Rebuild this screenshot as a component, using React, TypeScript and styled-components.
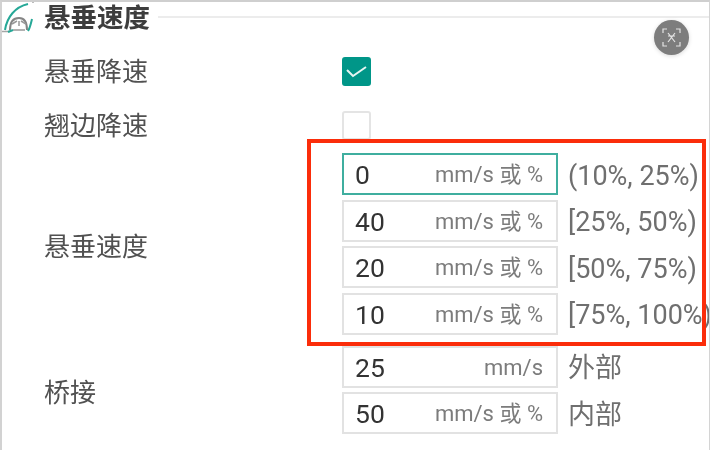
import styled, { createGlobalStyle } from 'styled-components'

const GlobalStyle = createGlobalStyle`
    html, body {
        margin: 0;
        padding: 0;
        background: #fff;
    }
    body {
        font-family: Roboto, "Noto Sans CJK SC", sans-serif;
    }
`

const Frame = styled.div`
    position: relative;
    box-sizing: border-box;
    width: 710px;
    height: 450px;
    overflow: hidden;
    border-top: 2px solid #cfcfcf;
    border-left: 2px solid #d2d2d2;
    border-right: 1px solid #d4d4d4;
    background: #fff;
    filter: blur(0.4px);
`

const Header = styled.div`
    display: flex;
    align-items: center;
    gap: 7px;
    height: 30px;
`

const HeaderIcon = styled.svg`
    flex: none;
    width: 35px;
    height: 32px;
`

const Title = styled.h2`
    margin: 0;
    padding-top: 2px;
    font-size: 26.5px;
    line-height: 30px;
    font-weight: 700;
    color: #3d3d3d;
    white-space: nowrap;
`

const Rule = styled.div`
    flex: 1;
    height: 2px;
    margin: -1px 0 0 1px;
    background: #ececec;
`

const Form = styled.div`
    display: flex;
    flex-direction: column;
    padding: 23px 0 0 42px;
`

const FormRow = styled.div<{ $gap?: number }>`
    display: grid;
    grid-template-columns: 298px 1fr;
    align-items: center;
    margin-bottom: ${(p) => p.$gap ?? 0}px;
`

const Label = styled.div<{ $shift: number }>`
    font-size: 26px;
    line-height: 30px;
    color: #515151;
    white-space: nowrap;
    padding-top: ${(p) => p.$shift}px;
`

const CheckBox = styled.div<{ $on?: boolean }>`
    box-sizing: border-box;
    width: 29px;
    height: 29px;
    display: flex;
    align-items: center;
    justify-content: center;
    border-radius: 3px;
    border: 2px solid ${(p) => (p.$on ? '#009688' : '#e4e4e4')};
    background: ${(p) => (p.$on ? '#009688' : '#fff')};
`

const Stack = styled.div`
    display: flex;
    flex-direction: column;
    gap: 4.5px;
`

const Row = styled.div`
    display: flex;
    align-items: center;
    gap: 10px;
`

const Field = styled.div<{ $focus?: boolean }>`
    box-sizing: border-box;
    width: 216px;
    height: 42px;
    display: flex;
    align-items: center;
    justify-content: space-between;
    padding: 2px 13px 0 11px;
    border: 2px solid ${(p) => (p.$focus ? '#3fae9f' : '#e2e2e2')};
    background: #fff;
`

const Value = styled.span`
    font-size: 26.5px;
    line-height: 34px;
    color: #333;
`

const Unit = styled.span`
    font-size: 22px;
    line-height: 34px;
    color: #7c7c7c;
    white-space: nowrap;
`

const Note = styled.span`
    font-size: 27px;
    line-height: 36px;
    padding-top: 3px;
    color: #6f6f6f;
    white-space: nowrap;
`

const Highlight = styled.div`
    position: absolute;
    left: 305px;
    top: 137px;
    width: 399px;
    height: 207px;
    box-sizing: border-box;
    border: 4.5px solid #fb2d0a;
    pointer-events: none;
`

const FloatButton = styled.div`
    position: absolute;
    left: 652px;
    top: 18px;
    width: 35px;
    height: 35px;
    display: flex;
    align-items: center;
    justify-content: center;
    border-radius: 50%;
    background: #7d7d7d;
    box-shadow: 0 1px 4px rgba(0, 0, 0, 0.15);
`

const speedRows = [
    { value: '0', note: '(10%, 25%)', focus: true },
    { value: '40', note: '[25%, 50%)' },
    { value: '20', note: '[50%, 75%)' },
    { value: '10', note: '[75%, 100%)' },
]

function OverhangIcon() {
    return (
        <HeaderIcon viewBox="0 0 35 32" fill="none">
            <path d="M31 0 V2 M0 30.5 H8" stroke="#a6a6a6" strokeWidth="1.5" />
            <path d="M3 29 C5 16 13 6 26 3" stroke="#26a897" strokeWidth="2" />
            <path d="M8 29 C8 20 12 17 17 17 C22 17 25 20 25 29" stroke="#858585" strokeWidth="2" />
            <path d="M10 23 L15 20 M19 20 L24 23 M17 20 L17 25 M11 29 L23 29" stroke="#989898" strokeWidth="1.5" />
            <path d="M6 31 L11 29 M26 30 C28 27 29 22 30 18" stroke="#26a897" strokeWidth="2" />
        </HeaderIcon>
    )
}

function App() {
    return (
        <Frame>
            <GlobalStyle />
            <Header>
                <OverhangIcon />
                <Title>悬垂速度</Title>
                <Rule />
            </Header>
            <Form>
                <FormRow $gap={22}>
                    <Label $shift={2}>悬垂降速</Label>
                    <CheckBox $on>
                        <svg width="21" height="14" viewBox="0 0 21 14" fill="none">
                            <path d="M1 6 L7 12 L20 3" stroke="#e6f5f2" strokeWidth="2" />
                        </svg>
                    </CheckBox>
                </FormRow>
                <FormRow $gap={12}>
                    <Label $shift={2}>翘边降速</Label>
                    <CheckBox />
                </FormRow>
                <FormRow $gap={11}>
                    <Label $shift={7}>悬垂速度</Label>
                    <Stack>
                        {speedRows.map((row) => (
                            <Row key={row.value}>
                                <Field $focus={row.focus}>
                                    <Value>{row.value}</Value>
                                    <Unit>mm/s 或 %</Unit>
                                </Field>
                                <Note>{row.note}</Note>
                            </Row>
                        ))}
                    </Stack>
                </FormRow>
                <FormRow>
                    <Label $shift={6}>桥接</Label>
                    <Stack>
                        <Row>
                            <Field>
                                <Value>25</Value>
                                <Unit>mm/s</Unit>
                            </Field>
                            <Note>外部</Note>
                        </Row>
                        <Row>
                            <Field>
                                <Value>50</Value>
                                <Unit>mm/s 或 %</Unit>
                            </Field>
                            <Note>内部</Note>
                        </Row>
                    </Stack>
                </FormRow>
            </Form>
            <Highlight />
            <FloatButton>
                <svg width="19" height="19" viewBox="0 0 19 19" fill="none" stroke="#e4e4e4" strokeWidth="1.2">
                    <path d="M1 5 V1 H5 M14 1 H18 V5 M18 14 V18 H14 M5 18 H1 V14" />
                    <path d="M6 5 L13 14 M13 5 L6 14 M6 8 H13" />
                </svg>
            </FloatButton>
        </Frame>
    )
}

export default App
